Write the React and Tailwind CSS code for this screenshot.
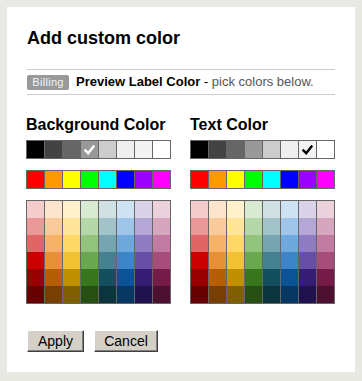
import React from "react";

const grays = ["#000000", "#434343", "#666666", "#999999", "#cccccc", "#efefef", "#f3f3f3", "#ffffff"];
const brights = ["#ff0000", "#ff9900", "#ffff00", "#00ff00", "#00ffff", "#0000ff", "#9900ff", "#ff00ff"];
const shades = [
  ["#f4cccc", "#ea9999", "#e06666", "#cc0000", "#990000", "#660000"],
  ["#fce5cd", "#f9cb9c", "#f6b26b", "#e69138", "#b45f06", "#783f04"],
  ["#fff2cc", "#ffe599", "#ffd966", "#f1c232", "#bf9000", "#7f6000"],
  ["#d9ead3", "#b6d7a8", "#93c47d", "#6aa84f", "#38761d", "#274e13"],
  ["#d0e0e3", "#a2c4c9", "#76a5af", "#45818e", "#134f5c", "#0c343d"],
  ["#cfe2f3", "#9fc5e8", "#6fa8dc", "#3d85c6", "#0b5394", "#073763"],
  ["#d9d2e9", "#b4a7d6", "#8e7cc3", "#674ea7", "#351c75", "#20124d"],
  ["#ead1dc", "#d5a6bd", "#c27ba0", "#a64d79", "#741b47", "#4c1130"],
];

const Check = ({ color }) => (
  <svg width="11" height="10" viewBox="0 0 11 10">
    <path d="M1.5 5.5 L4.2 8.2 L9.5 1.5" fill="none" stroke={color} strokeWidth="2.4" strokeLinecap="square" />
  </svg>
);

const SwatchRow = ({ colors, checked, checkColor }) => (
  <div className="flex w-fit border border-[#666]">
    {colors.map((c, i) => (
      <div
        key={c}
        className={`box-content w-[17px] h-[17px] flex items-center justify-center ${i > 0 ? "border-l border-[#666]" : ""}`}
        style={{ backgroundColor: c }}
      >
        {i === checked && <Check color={checkColor} />}
      </div>
    ))}
  </div>
);

const ShadeGrid = () => (
  <div className="flex w-fit border border-[#666]">
    {shades.map((col, i) => (
      <div key={i} className={`box-content flex flex-col ${i > 0 ? "border-l border-[#666]" : ""}`}>
        {col.map((c) => (
          <div key={c} className="w-[17px] h-[17px]" style={{ backgroundColor: c }} />
        ))}
      </div>
    ))}
  </div>
);

const Picker = ({ title, checked, checkColor }) => (
  <div className="flex flex-col w-[145px]">
    <h4 className="text-[16px] leading-[18px] font-bold text-black whitespace-nowrap">{title}</h4>
    <div className="mt-[6px]">
      <SwatchRow colors={grays} checked={checked} checkColor={checkColor} />
    </div>
    <div className="mt-[11px]">
      <SwatchRow colors={brights} />
    </div>
    <div className="mt-[11px]">
      <ShadeGrid />
    </div>
  </div>
);

const Button = ({ children, width }) => (
  <button
    className={`${width} h-[22px] bg-[#d4d0c8] text-[14px] leading-none text-black border border-t-white border-l-white border-r-[#404040] border-b-[#404040] shadow-[inset_-1px_-1px_0_#808080]`}
  >
    {children}
  </button>
);

export default function App() {
  return (
    <div
      className="min-h-screen bg-[#e9e9e4] p-[7px]"
      style={{ fontFamily: '"Liberation Sans", Arial, sans-serif' }}
    >
      <div className="bg-white pt-[21px] pb-[20px] pl-[19px] pr-[20px]">
        <h2 className="ml-px text-[18px] leading-[21px] font-bold text-black">Add custom color</h2>

        <div className="ml-px mt-[20px] h-[26px] flex items-center border-t border-b border-[#ccc]">
          <span className="w-[42px] h-[15px] flex items-center justify-center rounded-[2px] bg-[#999] text-[11px] tracking-[0.3px] text-[#f5f5f5] leading-none">
            Billing
          </span>
          <span className="ml-[7px] text-[13px] text-black whitespace-nowrap">
            <b>Preview Label Color</b> - <span className="text-[#555]">pick colors below.</span>
          </span>
        </div>

        <div className="mt-[21px] flex gap-[19px]">
          <Picker title="Background Color" checked={3} checkColor="#ffffff" />
          <Picker title="Text Color" checked={6} checkColor="#000000" />
        </div>

        <div className="ml-px mt-[26px] flex gap-[10px]">
          <Button width="w-[57px]">Apply</Button>
          <Button width="w-[64px]">Cancel</Button>
        </div>
      </div>
    </div>
  );
}
